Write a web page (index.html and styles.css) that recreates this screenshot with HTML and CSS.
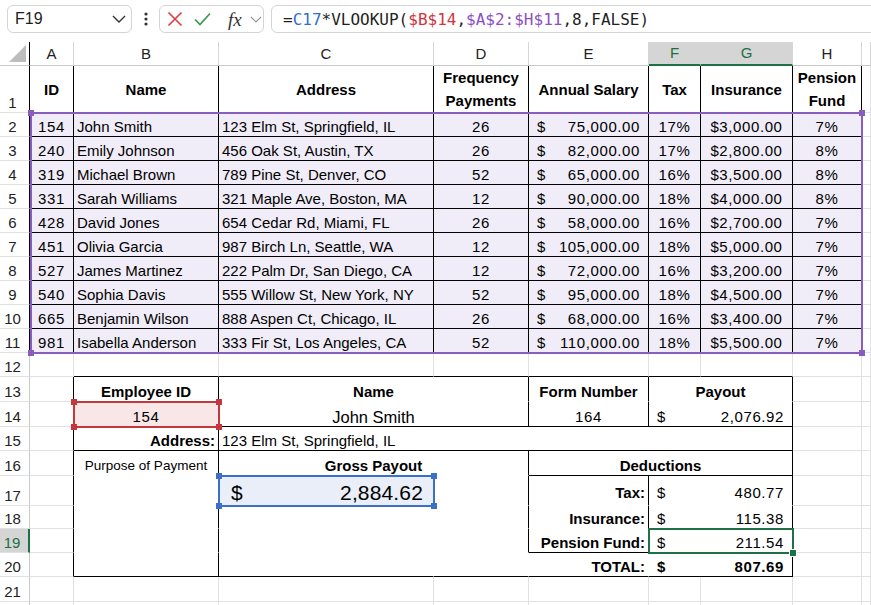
FILE: index.html
```html
<!DOCTYPE html>
<html>
<head>
<meta charset="utf-8">
<title>Payout</title>
<link rel="stylesheet" href="styles.css">
</head>
<body>
<div class="toolbar">
  <div class="namebox"><span>F19</span><svg class="chev" width="14" height="8" viewBox="0 0 14 8"><path d="M1 1L7 7L13 1" fill="none" stroke="#333" stroke-width="1.4"/></svg></div>
  <div class="dots"><svg width="4" height="16" viewBox="0 0 4 16"><circle cx="2" cy="3" r="1.6" fill="#333"/><circle cx="2" cy="8" r="1.6" fill="#333"/><circle cx="2" cy="13" r="1.6" fill="#333"/></svg></div>
  <div class="fbtns">
    <svg class="ic-x" width="16" height="16" viewBox="0 0 16 16"><path d="M1.5 1.5L14.5 14.5M14.5 1.5L1.5 14.5" fill="none" stroke="#e0393e" stroke-width="1.6"/></svg>
    <svg class="ic-ok" width="17" height="14" viewBox="0 0 17 14"><path d="M1 7.5L6 12.5L16 1.5" fill="none" stroke="#3a9a4e" stroke-width="1.7"/></svg>
    <span class="fx">fx</span>
    <svg class="chev-s" width="12" height="7" viewBox="0 0 12 7"><path d="M1 1L6 6L11 1" fill="none" stroke="#9a9a9a" stroke-width="1.2"/></svg>
  </div>
  <div class="formula"><span>=<span class="rf-b">C17</span>*VLOOKUP(<span class="rf-r">$B$14</span>,<span class="rf-p">$A$2:$H$11</span>,8,FALSE)</span></div>
</div>

<div class="sheet">
  <div class="grid cells">
    <!-- column headers -->
    <div class="c corner"><svg width="17" height="17" viewBox="0 0 17 17"><polygon points="17,0 17,17 0,17" fill="#bdbdbd"/></svg></div>
    <div class="c ch">A</div><div class="c ch">B</div><div class="c ch">C</div><div class="c ch">D</div><div class="c ch">E</div><div class="c ch sel">F</div><div class="c ch sel">G</div><div class="c ch">H</div><div class="c ch"></div>

    <!-- row 1 -->
    <div class="c rh blk">1</div>
    <div class="c t th">ID</div><div class="c t th">Name</div><div class="c t th">Address</div><div class="c t th">Frequency Payments</div><div class="c t th">Annual Salary</div><div class="c t th">Tax</div><div class="c t th">Insurance</div><div class="c t th">Pension Fund</div><div class="c"></div>

    <div class="c rh blk">2</div><div class="c t ctr n">154</div><div class="c t">John Smith</div><div class="c t">123 Elm St, Springfield, IL</div><div class="c t ctr n">26</div><div class="c t acc n"><span>$</span><span>75,000.00</span></div><div class="c t ctr n">17%</div><div class="c t ctr n">$3,000.00</div><div class="c t ctr n">7%</div><div class="c"></div>
    <div class="c rh blk">3</div><div class="c t ctr n">240</div><div class="c t">Emily Johnson</div><div class="c t">456 Oak St, Austin, TX</div><div class="c t ctr n">26</div><div class="c t acc n"><span>$</span><span>82,000.00</span></div><div class="c t ctr n">17%</div><div class="c t ctr n">$2,800.00</div><div class="c t ctr n">8%</div><div class="c"></div>
    <div class="c rh blk">4</div><div class="c t ctr n">319</div><div class="c t">Michael Brown</div><div class="c t">789 Pine St, Denver, CO</div><div class="c t ctr n">52</div><div class="c t acc n"><span>$</span><span>65,000.00</span></div><div class="c t ctr n">16%</div><div class="c t ctr n">$3,500.00</div><div class="c t ctr n">8%</div><div class="c"></div>
    <div class="c rh blk">5</div><div class="c t ctr n">331</div><div class="c t">Sarah Williams</div><div class="c t">321 Maple Ave, Boston, MA</div><div class="c t ctr n">12</div><div class="c t acc n"><span>$</span><span>90,000.00</span></div><div class="c t ctr n">18%</div><div class="c t ctr n">$4,000.00</div><div class="c t ctr n">8%</div><div class="c"></div>
    <div class="c rh blk">6</div><div class="c t ctr n">428</div><div class="c t">David Jones</div><div class="c t">654 Cedar Rd, Miami, FL</div><div class="c t ctr n">26</div><div class="c t acc n"><span>$</span><span>58,000.00</span></div><div class="c t ctr n">16%</div><div class="c t ctr n">$2,700.00</div><div class="c t ctr n">7%</div><div class="c"></div>
    <div class="c rh blk">7</div><div class="c t ctr n">451</div><div class="c t">Olivia Garcia</div><div class="c t">987 Birch Ln, Seattle, WA</div><div class="c t ctr n">12</div><div class="c t acc n"><span>$</span><span>105,000.00</span></div><div class="c t ctr n">18%</div><div class="c t ctr n">$5,000.00</div><div class="c t ctr n">7%</div><div class="c"></div>
    <div class="c rh blk">8</div><div class="c t ctr n">527</div><div class="c t">James Martinez</div><div class="c t">222 Palm Dr, San Diego, CA</div><div class="c t ctr n">12</div><div class="c t acc n"><span>$</span><span>72,000.00</span></div><div class="c t ctr n">16%</div><div class="c t ctr n">$3,200.00</div><div class="c t ctr n">7%</div><div class="c"></div>
    <div class="c rh blk">9</div><div class="c t ctr n">540</div><div class="c t">Sophia Davis</div><div class="c t">555 Willow St, New York, NY</div><div class="c t ctr n">52</div><div class="c t acc n"><span>$</span><span>95,000.00</span></div><div class="c t ctr n">18%</div><div class="c t ctr n">$4,500.00</div><div class="c t ctr n">7%</div><div class="c"></div>
    <div class="c rh blk">10</div><div class="c t ctr n">665</div><div class="c t">Benjamin Wilson</div><div class="c t">888 Aspen Ct, Chicago, IL</div><div class="c t ctr n">26</div><div class="c t acc n"><span>$</span><span>68,000.00</span></div><div class="c t ctr n">16%</div><div class="c t ctr n">$3,400.00</div><div class="c t ctr n">7%</div><div class="c"></div>
    <div class="c rh blk">11</div><div class="c t ctr n">981</div><div class="c t">Isabella Anderson</div><div class="c t">333 Fir St, Los Angeles, CA</div><div class="c t ctr n">52</div><div class="c t acc n"><span>$</span><span>110,000.00</span></div><div class="c t ctr n">18%</div><div class="c t ctr n">$5,500.00</div><div class="c t ctr n">7%</div><div class="c"></div>

    <!-- row 12 -->
    <div class="c rh">12</div><div class="c"></div><div class="c bb"></div><div class="c bb"></div><div class="c bb"></div><div class="c bb"></div><div class="c bb"></div><div class="c bb"></div><div class="c"></div><div class="c"></div>

    <!-- row 13 -->
    <div class="c rh">13</div><div class="c br"></div>
    <div class="c f br b ctr">Employee ID</div>
    <div class="c f br b ctr s2">Name</div>
    <div class="c f br b ctr">Form Number</div>
    <div class="c f br b ctr s2">Payout</div>
    <div class="c"></div><div class="c"></div>

    <!-- row 14 -->
    <div class="c rh">14</div><div class="c br"></div>
    <div class="c f br bb ctr n pink">154</div>
    <div class="c f br bb ctr s2 big">John Smith</div>
    <div class="c f br bb ctr n">164</div>
    <div class="c f br bb acc n s2"><span>$</span><span>2,076.92</span></div>
    <div class="c"></div><div class="c"></div>

    <!-- row 15 -->
    <div class="c rh">15</div><div class="c br"></div>
    <div class="c f br bb b rt">Address:</div>
    <div class="c f br bb s5">123 Elm St, Springfield, IL</div>
    <div class="c"></div><div class="c"></div>

    <!-- row 16 -->
    <div class="c rh">16</div><div class="c br"></div>
    <div class="c f br ctr small">Purpose of Payment</div>
    <div class="c f br b ctr s2">Gross Payout</div>
    <div class="c f br bb b ctr s3">Deductions</div>
    <div class="c"></div><div class="c"></div>

    <!-- row 17 -->
    <div class="c rh">17</div><div class="c br"></div>
    <div class="c f br"></div>
    <div class="c f acc xl blue"><span>$</span><span>2,884.62</span></div>
    <div class="c f br"></div>
    <div class="c f br b rt p3">Tax:</div>
    <div class="c f br acc n s2 p3"><span>$</span><span>480.77</span></div>
    <div class="c"></div><div class="c"></div>

    <!-- row 18 -->
    <div class="c rh">18</div><div class="c br"></div>
    <div class="c f br"></div>
    <div class="c f"></div>
    <div class="c f br"></div>
    <div class="c f br b rt">Insurance:</div>
    <div class="c f br acc n s2"><span>$</span><span>115.38</span></div>
    <div class="c"></div><div class="c"></div>

    <!-- row 19 -->
    <div class="c rh sel">19</div><div class="c br"></div>
    <div class="c f br"></div>
    <div class="c f"></div>
    <div class="c f br"></div>
    <div class="c f br bb b rt">Pension Fund:</div>
    <div class="c f br bb acc n s2"><span>$</span><span>211.54</span></div>
    <div class="c"></div><div class="c"></div>

    <!-- row 20 -->
    <div class="c rh">20</div><div class="c br"></div>
    <div class="c f br bb"></div>
    <div class="c f bb"></div>
    <div class="c f bb"></div>
    <div class="c f bb b rt">TOTAL:</div>
    <div class="c f br bb acc n b s2"><span>$</span><span>807.69</span></div>
    <div class="c"></div><div class="c"></div>

    <!-- row 21 -->
    <div class="c rh">21</div><div class="c"></div><div class="c"></div><div class="c"></div><div class="c"></div><div class="c"></div><div class="c"></div><div class="c"></div><div class="c"></div><div class="c"></div>
    <!-- row 22 (cut off by the window) -->
    <div class="c rh"></div><div class="c"></div><div class="c"></div><div class="c"></div><div class="c"></div><div class="c"></div><div class="c"></div><div class="c"></div><div class="c"></div><div class="c"></div>
  </div>

  <div class="grid marks">
    <div class="box box-p"><i class="h tl"></i><i class="h tr"></i><i class="h bl"></i><i class="h br4"></i></div>
    <div class="box box-r"><i class="h tl"></i><i class="h tr"></i><i class="h bl"></i><i class="h br4"></i></div>
    <div class="box box-b"><i class="h tl"></i><i class="h tr"></i><i class="h bl"></i><i class="h br4"></i></div>
    <div class="box box-g"><i class="h br4 fill"></i></div>
  </div>
</div>
</body>
</html>
```

FILE: styles.css
```css
* { box-sizing: border-box; margin: 0; padding: 0; }
html, body { width: 871px; height: 605px; overflow: hidden; background: #fff; }
body { font-family: "Liberation Sans", Arial, sans-serif; color: #000; }

/* formula bar */
.toolbar { height: 42px; display: flex; align-items: flex-start; padding: 5px 0 0 7px; background: #fff; }
.namebox { width: 125px; height: 28px; border: 1px solid #d4d4d4; border-radius: 6px; background: #fff; display: flex; align-items: center; justify-content: space-between; padding: 0 5px 0 7px; font-size: 16px; color: #1f1f1f; }
.dots { width: 27px; height: 28px; display: flex; align-items: center; justify-content: center; }
.fbtns { width: 105px; height: 28px; border: 1px solid #d4d4d4; border-radius: 6px; background: #fff; display: flex; align-items: center; padding-left: 7px; }
.ic-ok { margin-left: 11px; }
.fx { margin-left: 17px; width: 17px; font-family: "Liberation Serif", serif; font-style: italic; font-size: 19px; color: #333; line-height: 1; }
.chev-s { margin-left: 5px; }
.formula { flex: 1; height: 28px; margin-left: 7px; margin-right: -10px; border: 1px solid #d4d4d4; border-radius: 6px; background: #fff; display: flex; align-items: center; padding-left: 11px; font-family: "DejaVu Sans Mono", monospace; font-size: 16px; white-space: nowrap; color: #1f1f1f; }
.rf-b { color: #2f6fd0; }
.rf-r { color: #d1343b; }
.rf-p { color: #8e4fc4; }

/* sheet */
.sheet { display: grid; }
.grid {
  grid-area: 1 / 1;
  display: grid;
  grid-template-columns: 30px 44px 145px 215px 95px 120px 52px 92px 69px 9px;
  grid-template-rows: 24px 47px repeat(10, 24px) 24px 25px 25px 24px 25px 30px 23px 24px 24px 25px 24px;
}
.marks { pointer-events: none; }

.c { border-right: 1px solid #e1e1e1; border-bottom: 1px solid #e1e1e1; display: flex; align-items: flex-end; padding: 0 3px; font-size: 15px; line-height: 18px; white-space: nowrap; overflow: hidden; background: #fff; }

.corner { border-right-color: #000; border-bottom-color: #c8c8c8; justify-content: flex-end; padding: 0 3px 3px 0; }
.ch { justify-content: center; align-items: center; border-right-color: #d6d6d6; border-bottom-color: #c8c8c8; color: #222; }
.ch.sel { background: #d5d5d5; color: #1e6e42; border-bottom: 2px solid #1e7145; }
.rh { justify-content: center; padding: 0 4px 0 0; border-right-color: #c8c8c8; color: #222; }
.rh.blk { border-right-color: #000; }
.rh.sel { background: #d5d5d5; color: #1e6e42; border-right: 2px solid #1e7145; }

.t { border-right-color: #000; border-bottom-color: #000; background: #f0edf8; }
.th { background: #fff; font-weight: bold; justify-content: center; align-items: center; text-align: center; white-space: normal; line-height: 23px; }

.ctr { justify-content: center; }
.rt { justify-content: flex-end; }
.acc { justify-content: space-between; padding: 0 8px 0 8px; }
.n { letter-spacing: 0.6px; }
.b { font-weight: bold; }
.s2 { grid-column: span 2; }
.s3 { grid-column: span 3; }
.s5 { grid-column: span 5; }

.f { border-right-color: #fff; border-bottom-color: #fff; }
.br { border-right-color: #000; }
.bb { border-bottom-color: #000; }
.pink { background: #f9e7e8; }
.blue { background: #e9eef8; }
.big { font-size: 16.5px; }
.small { font-size: 13.5px; }
.xl { font-size: 21px; line-height: 25px; padding: 0 10px 0 12px; letter-spacing: 0.15px; }
.p3 { padding-bottom: 3px; }

/* reference highlight boxes */
.box { position: relative; border: 2px solid currentColor; margin: -1px; }
.box-p { grid-column: 2 / 10; grid-row: 3 / 13; color: #8a5cbf; margin: -1px -1px -1px 0; }
.box-r { grid-column: 3 / 4; grid-row: 15 / 16; color: #c4373c; }
.box-b { grid-column: 4 / 5; grid-row: 18 / 19; color: #3a70c8; }
.box-g { grid-column: 7 / 9; grid-row: 20 / 21; color: #1e7145; }
.h { position: absolute; width: 6px; height: 6px; background: currentColor; }
.tl { left: -4px; top: -4px; }
.tr { right: -4px; top: -4px; }
.bl { left: -4px; bottom: -4px; }
.br4 { right: -4px; bottom: -4px; }
.fill { outline: 1px solid #fff; }
```
